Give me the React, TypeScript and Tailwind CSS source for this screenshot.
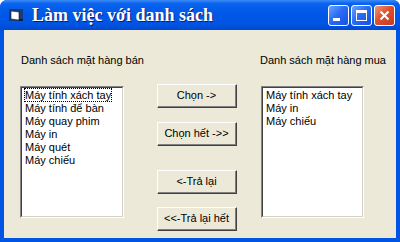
import React from 'react';

const sellItems = ['Máy tính xách tay', 'Máy tính để bàn', 'Máy quay phim', 'Máy in', 'Máy quét', 'Máy chiếu'];
const buyItems = ['Máy tính xách tay', 'Máy in', 'Máy chiếu'];

function ListBox({ items, focusFirst }: { items: string[]; focusFirst?: boolean }) {
    return (
        <div className="w-full h-[132px] border-t border-l border-t-[#848284] border-l-[#848284] border-b border-r border-b-white border-r-white">
            <div className="w-full h-full bg-white border-t border-l border-t-[#424142] border-l-[#424142] border-b border-r border-b-[#d4d0c8] border-r-[#d4d0c8] pt-px pl-px">
                {items.map((item, i) => (
                    <div key={i} className="h-[13px] leading-[13px] pl-[2px] pr-[2px] whitespace-nowrap">
                        <span className={focusFirst && i === 0 ? 'outline outline-1 outline-dotted outline-black' : ''}>{item}</span>
                    </div>
                ))}
            </div>
        </div>
    );
}

function Button({ label, className }: { label: string; className?: string }) {
    return (
        <div className={`w-[80px] h-[24px] border-t border-l border-t-white border-l-white border-b border-r border-b-[#404040] border-r-[#404040] ${className || ''}`}>
            <div className="w-full h-full bg-[#ece9d8] border-b border-r border-b-[#808080] border-r-[#808080] flex items-center justify-center">
                {label}
            </div>
        </div>
    );
}

function TitleButton({ kind }: { kind: 'min' | 'max' | 'close' }) {
    const bg = kind === 'close'
        ? 'bg-[linear-gradient(135deg,#f09878_0%,#e0502e_45%,#c83a1c_100%)]'
        : 'bg-[linear-gradient(135deg,#6ea4ff_0%,#2a6cf5_45%,#1850e0_100%)]';
    return (
        <div className={`w-[21px] h-[21px] rounded-[3px] border border-white flex items-center justify-center ${bg}`}>
            {kind === 'min' && <div className="w-[7px] h-[3px] bg-white mt-[8px] -ml-[5px]" />}
            {kind === 'max' && <div className="w-[11px] h-[11px] border border-white border-t-[3px]" />}
            {kind === 'close' && (
                <svg width="11" height="11" viewBox="0 0 11 11">
                    <path d="M1.5 1.5 L9.5 9.5 M9.5 1.5 L1.5 9.5" stroke="white" strokeWidth="2" />
                </svg>
            )}
        </div>
    );
}

export default function App() {
    return (
        <div className="w-[400px] h-[242px] bg-white font-['Liberation_Sans',Arial,sans-serif] text-[11px] text-black">
            <div className="w-full h-full flex flex-col rounded-t-[7px] overflow-hidden bg-[#0054e3]">
                {/* Title bar */}
                <div className="h-[30px] shrink-0 flex items-center pl-[8px] pr-[5px] bg-[linear-gradient(to_bottom,#3b8bf7_0%,#0a63ee_12%,#0058e8_45%,#0054e3_80%,#0049d0_100%)]">
                    <svg width="17" height="16" viewBox="0 0 17 16" className="shrink-0">
                        <rect x="1" y="2" width="14" height="12" fill="#1a3a78" />
                        <path d="M3 4 L11 5 L11 13 L3 12 Z" fill="white" stroke="#0a1a40" strokeWidth="0.6" />
                        <rect x="11" y="12" width="4" height="2" fill="#0a1a40" />
                    </svg>
                    <span className="ml-[7px] font-['Liberation_Serif','Times_New_Roman',serif] font-bold text-[18px] text-white [text-shadow:1px_1px_0_#0a1f6a] whitespace-nowrap">
                        Làm việc với danh sách
                    </span>
                    <div className="ml-auto flex gap-[2px]">
                        <TitleButton kind="min" />
                        <TitleButton kind="max" />
                        <TitleButton kind="close" />
                    </div>
                </div>
                {/* Body */}
                <div className="flex-1 mx-[4px] mb-[4px] bg-[#ece9d8] flex pl-[16px]">
                    <div className="w-[104px] flex flex-col pt-[24px]">
                        <div className="h-[13px] leading-[13px] whitespace-nowrap pl-px">Danh sách mặt hàng bán</div>
                        <div className="mt-[19px]">
                            <ListBox items={sellItems} focusFirst />
                        </div>
                    </div>
                    <div className="ml-[33px] flex flex-col pt-[54px]">
                        <Button label="Chọn ->" />
                        <Button label="Chọn hết ->>" className="mt-[14px]" />
                        <Button label="<-Trả lại" className="mt-[24px]" />
                        <Button label="<<-Trả lại hết" className="mt-[13px]" />
                    </div>
                    <div className="ml-[24px] w-[103px] flex flex-col pt-[24px]">
                        <div className="h-[13px] leading-[13px] whitespace-nowrap -ml-px">Danh sách mặt hàng mua</div>
                        <div className="mt-[19px]">
                            <ListBox items={buyItems} />
                        </div>
                    </div>
                </div>
            </div>
        </div>
    );
}
